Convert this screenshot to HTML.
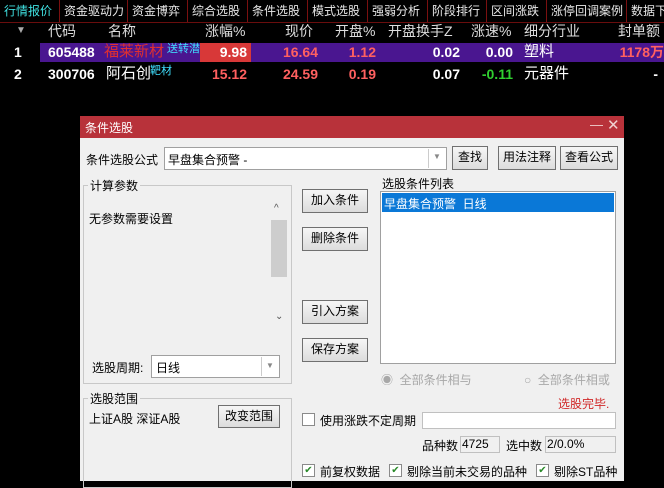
<!DOCTYPE html><html><head><meta charset="utf-8"><style>
*{margin:0;padding:0;box-sizing:border-box}
body{width:664px;height:481px;background:#000;position:relative;overflow:hidden;font-family:"Liberation Sans","Noto Sans CJK SC",sans-serif;font-size:13px}
.a{position:absolute;white-space:nowrap}
.tab{position:absolute;top:0;height:22px;line-height:22px;color:#e8e8e8;font-size:12px;border-right:1px solid #7a1010;padding-left:4px;overflow:hidden;white-space:nowrap}
.h{position:absolute;top:21px;line-height:20px;color:#ddd;font-size:14px}
.r{position:absolute;line-height:20px;font-size:14px;font-weight:bold;text-align:right}
.btn{position:absolute;background:linear-gradient(#f6f6f6,#dcdcdc);border:1px solid #707070;font-size:12px;line-height:21px;text-align:center;color:#000}
.box{position:absolute;background:#fff;border:1px solid #a0a0a0}
.t{position:absolute;font-size:12px;color:#000;white-space:nowrap}
.grp{position:absolute;border:1px solid #c8c8c8}
.cb{position:absolute;width:13px;height:13px;border:1px solid #8a8a8a;background:#fff;font-size:10px;color:#2a8a2a;line-height:11px;text-align:center}
</style></head><body>
<div class="tab" style="left:0;width:60px;color:#3fe0e0">行情报价</div>
<div class="tab" style="left:60px;width:68px">资金驱动力</div>
<div class="tab" style="left:128px;width:60px">资金博弈</div>
<div class="tab" style="left:188px;width:60px">综合选股</div>
<div class="tab" style="left:248px;width:60px">条件选股</div>
<div class="tab" style="left:308px;width:60px">模式选股</div>
<div class="tab" style="left:368px;width:60px">强弱分析</div>
<div class="tab" style="left:428px;width:59px">阶段排行</div>
<div class="tab" style="left:487px;width:60px">区间涨跌</div>
<div class="tab" style="left:547px;width:80px">涨停回调案例</div>
<div class="tab" style="left:627px;width:40px;border:none">数据下</div>
<div class="a" style="left:0;top:22px;width:664px;height:1px;background:#6a0d0d"></div>
<div class="h" style="left:16px;font-size:10px;color:#aaa">▼</div>
<div class="h" style="left:48px">代码</div><div class="h" style="left:108px">名称</div>
<div class="h" style="left:205px">涨幅%</div><div class="h" style="left:285px">现价</div>
<div class="h" style="left:335px">开盘%</div><div class="h" style="left:388px">开盘换手Z</div>
<div class="h" style="left:471px">涨速%</div><div class="h" style="left:524px">细分行业</div>
<div class="h" style="left:618px">封单额</div>
<div class="a" style="left:40px;top:43px;width:624px;height:19px;background:#4a1690"></div>
<div class="a" style="left:200px;top:43px;width:51px;height:19px;background:#d83838"></div>
<div class="r" style="left:14px;top:42px;color:#fff">1</div>
<div class="r" style="left:48px;top:42px;color:#fff">605488</div>
<div class="a" style="left:104px;top:42px;line-height:20px;font-size:15px;color:#e03030">福莱新材</div>
<div class="a" style="left:167px;top:40px;font-size:11px;color:#40e0ff">送转潜</div>
<div class="r" style="left:200px;top:42px;width:47px;color:#fff">9.98</div>
<div class="r" style="left:260px;top:42px;width:58px;color:#ff6060">16.64</div>
<div class="r" style="left:320px;top:42px;width:56px;color:#ff6060">1.12</div>
<div class="r" style="left:400px;top:42px;width:60px;color:#fff">0.02</div>
<div class="r" style="left:470px;top:42px;width:43px;color:#fff">0.00</div>
<div class="a" style="left:524px;top:42px;line-height:20px;font-size:15px;color:#fff">塑料</div>
<div class="r" style="left:600px;top:42px;width:64px;color:#ff6060">1178万</div>
<div class="r" style="left:14px;top:64px;color:#fff">2</div>
<div class="r" style="left:48px;top:64px;color:#fff">300706</div>
<div class="a" style="left:106px;top:64px;line-height:20px;font-size:15px;color:#fff">阿石创</div>
<div class="a" style="left:150px;top:62px;font-size:11px;color:#40e0ff">靶材</div>
<div class="r" style="left:190px;top:64px;width:57px;color:#ff6060">15.12</div>
<div class="r" style="left:260px;top:64px;width:58px;color:#ff6060">24.59</div>
<div class="r" style="left:320px;top:64px;width:56px;color:#ff6060">0.19</div>
<div class="r" style="left:400px;top:64px;width:60px;color:#fff">0.07</div>
<div class="r" style="left:470px;top:64px;width:43px;color:#30d030">-0.11</div>
<div class="a" style="left:524px;top:64px;line-height:20px;font-size:15px;color:#fff">元器件</div>
<div class="r" style="left:600px;top:64px;width:58px;color:#fff">-</div>

<div class="a" style="left:80px;top:116px;width:544px;height:365px;background:#f0f0f0"></div>
<div class="a" style="left:80px;top:116px;width:544px;height:22px;background:#b8323a"></div>
<div class="a" style="left:85px;top:119px;color:#fff;font-size:12px">条件选股</div>
<div class="a" style="left:590px;top:117px;color:#f0d0d0;font-size:13px">—</div>
<div class="a" style="left:607px;top:116px;color:#f0d0d0;font-size:15px">✕</div>

<div class="t" style="left:86px;top:151px">条件选股公式</div>
<div class="box" style="left:164px;top:147px;width:283px;height:23px"></div>
<div class="t" style="left:168px;top:151px">早盘集合预警 -</div>
<div class="a" style="left:428px;top:149px;width:1px;height:19px;background:#ccc"></div>
<div class="a" style="left:433px;top:152px;font-size:8px;color:#888">▼</div>
<div class="btn" style="left:452px;top:146px;width:36px;height:24px">查找</div>
<div class="btn" style="left:498px;top:146px;width:58px;height:24px">用法注释</div>
<div class="btn" style="left:560px;top:146px;width:58px;height:24px">查看公式</div>

<div class="grp" style="left:83px;top:185px;width:209px;height:199px"></div>
<div class="t" style="left:88px;top:177px;background:#f0f0f0;padding:0 2px">计算参数</div>
<div class="t" style="left:89px;top:210px">无参数需要设置</div>
<div class="a" style="left:271px;top:220px;width:16px;height:57px;background:#cdcdcd"></div>
<div class="a" style="left:274px;top:203px;font-size:10px;color:#555">^</div>
<div class="a" style="left:275px;top:311px;font-size:10px;color:#555">⌄</div>
<div class="t" style="left:92px;top:359px">选股周期:</div>
<div class="box" style="left:151px;top:355px;width:129px;height:23px"></div>
<div class="t" style="left:156px;top:359px">日线</div>
<div class="a" style="left:261px;top:357px;width:1px;height:19px;background:#ccc"></div>
<div class="a" style="left:266px;top:361px;font-size:8px;color:#888">▼</div>

<div class="grp" style="left:83px;top:398px;width:209px;height:90px"></div>
<div class="t" style="left:88px;top:390px;background:#f0f0f0;padding:0 2px">选股范围</div>
<div class="t" style="left:89px;top:410px">上证A股 深证A股</div>
<div class="btn" style="left:218px;top:405px;width:62px;height:23px">改变范围</div>

<div class="btn" style="left:302px;top:189px;width:66px;height:24px">加入条件</div>
<div class="btn" style="left:302px;top:227px;width:66px;height:24px">删除条件</div>
<div class="btn" style="left:302px;top:300px;width:66px;height:24px">引入方案</div>
<div class="btn" style="left:302px;top:338px;width:66px;height:24px">保存方案</div>

<div class="t" style="left:382px;top:175px">选股条件列表</div>
<div class="box" style="left:380px;top:191px;width:236px;height:173px"></div>
<div class="a" style="left:382px;top:193px;width:232px;height:19px;background:#0a78d7"></div>
<div class="t" style="left:384px;top:195px;color:#fff">早盘集合预警&nbsp; 日线</div>
<div class="t" style="left:381px;top:371px;color:#a8a8a8">◉&nbsp; 全部条件相与</div>
<div class="t" style="left:524px;top:371px;color:#a8a8a8">○&nbsp; 全部条件相或</div>
<div class="t" style="left:558px;top:395px;color:#d02828">选股完毕.</div>
<div class="cb" style="left:302px;top:413px"></div>
<div class="t" style="left:320px;top:412px">使用涨跌不定周期</div>
<div class="box" style="left:422px;top:412px;width:194px;height:17px;border-color:#c0c0c0"></div>
<div class="t" style="left:422px;top:437px">品种数</div>
<div class="box" style="left:460px;top:436px;width:40px;height:17px;background:#f0f0f0;border-color:#c0c0c0"></div>
<div class="t" style="left:462px;top:437px">4725</div>
<div class="t" style="left:506px;top:437px">选中数</div>
<div class="box" style="left:545px;top:436px;width:71px;height:17px;background:#f0f0f0;border-color:#c0c0c0"></div>
<div class="t" style="left:547px;top:437px">2/0.0%</div>
<div class="cb" style="left:302px;top:464px">✔</div><div class="t" style="left:320px;top:463px">前复权数据</div>
<div class="cb" style="left:389px;top:464px">✔</div><div class="t" style="left:407px;top:463px">剔除当前未交易的品种</div>
<div class="cb" style="left:536px;top:464px">✔</div><div class="t" style="left:554px;top:463px">剔除ST品种</div>
</body></html>
